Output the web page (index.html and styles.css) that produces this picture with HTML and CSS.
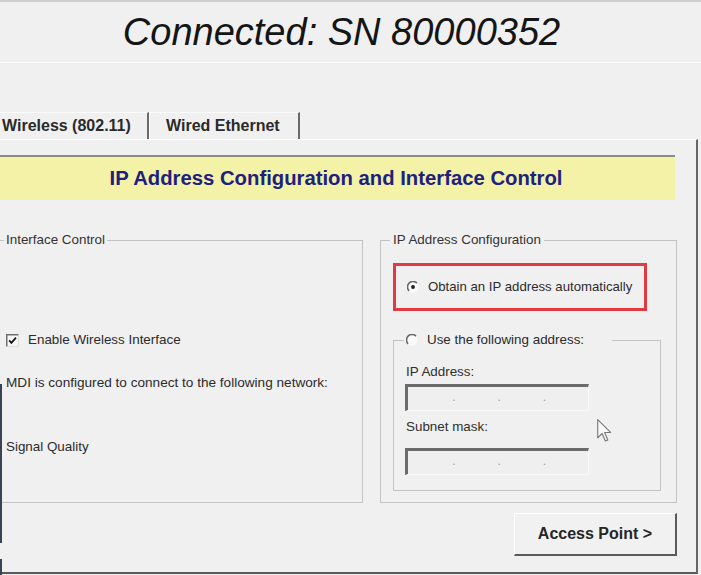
FILE: index.html
```html
<!DOCTYPE html>
<html lang="en">
<head>
<meta charset="utf-8">
<title>Connected: SN 80000352</title>
<link rel="stylesheet" href="styles.css">
</head>
<body>
<div class="topline"></div>
<header class="hdr">Connected: SN 80000352</header>
<nav class="tabs">
  <div class="tab tab-active">Wireless (802.11)</div>
  <div class="tab tab-second">Wired Ethernet</div>
</nav>
<main class="panel">
  <div class="banner">IP Address Configuration and Interface Control</div>
  <div class="groups">
    <fieldset class="grp grp-left">
      <legend class="lg">Interface Control</legend>
      <label class="check-row">
        <svg class="chk" width="13" height="13" viewBox="0 0 13 13">
          <rect x="0" y="0" width="13" height="13" fill="#f8f8f8"/>
          <path d="M0.75 12.6 V0.75 H12.6" stroke="#6e6e6e" stroke-width="1.5" fill="none"/>
          <path d="M1.5 12.4 H12.4 V1.5" stroke="#dcdcdc" stroke-width="1" fill="none"/>
          <path d="M3.2 6.4 L5.4 8.9 L10 3.6" stroke="#151515" stroke-width="1.8" fill="none"/>
        </svg>
        <span>Enable Wireless Interface</span>
      </label>
      <p class="txt mdi">MDI is configured to connect to the following network:</p>
      <p class="txt sig">Signal Quality</p>
    </fieldset>
    <fieldset class="grp grp-right">
      <legend class="lg lg-right">IP Address Configuration</legend>
      <div class="highlight">
        <svg class="radio" width="12" height="12" viewBox="0 0 12 12">
          <circle cx="6" cy="6" r="5.5" fill="#fafafa"/>
          <path d="M9.9 2.1 A5.5 5.5 0 0 0 2.1 9.9" stroke="#6a6a6a" stroke-width="1.6" fill="none"/>
          <circle cx="6" cy="6" r="1.9" fill="#1e1e1e"/>
        </svg>
        <span class="txt">Obtain an IP address automatically</span>
      </div>
      <fieldset class="grp grp-inner">
        <legend class="lg lg-radio">
          <svg class="radio" width="12" height="12" viewBox="0 0 12 12">
            <circle cx="6" cy="6" r="5.5" fill="#fafafa"/>
            <path d="M9.9 2.1 A5.5 5.5 0 0 0 2.1 9.9" stroke="#6a6a6a" stroke-width="1.6" fill="none"/>
          </svg><span class="txt">Use the following address:</span>
        </legend>
        <div class="field-label first">IP Address:</div>
        <div class="ipbox"><span class="seg"></span><span class="dot">.</span><span class="seg"></span><span class="dot">.</span><span class="seg"></span><span class="dot">.</span><span class="seg"></span></div>
        <div class="field-label second">Subnet mask:</div>
        <div class="ipbox ipbox-2"><span class="seg"></span><span class="dot">.</span><span class="seg"></span><span class="dot">.</span><span class="seg"></span><span class="dot">.</span><span class="seg"></span></div>
      </fieldset>
    </fieldset>
  </div>
  <div class="actions">
    <button class="btn" type="button">Access Point &gt;</button>
  </div>
  <svg class="cursor" width="15" height="23" viewBox="0 0 13 20">
    <path d="M0.6 0.6 L0.6 16.4 L4.4 12.6 L7.3 19.2 L9.4 18.2 L6.6 11.7 L11.8 11.7 Z" fill="#f8f8f8" stroke="#7a7a7a" stroke-width="1" stroke-linejoin="round"/>
  </svg>
</main>
</body>
</html>
```

FILE: styles.css
```css
html, body {
  margin: 0;
  padding: 0;
}
body {
  width: 701px;
  height: 575px;
  overflow: hidden;
  background: #f0f0f0;
  font-family: "Liberation Sans", Arial, sans-serif;
  color: #2b2b2b;
}
.topline {
  height: 2px;
  background: #cfcfcf;
}
.hdr {
  height: 60px;
  line-height: 60px;
  border-bottom: 1px solid #fbfbfb;
  text-align: center;
  font-size: 38px;
  font-style: italic;
  color: #151515;
  padding-right: 18px;
}
.tabs {
  display: flex;
  margin-top: 49px;
  height: 27px;
}
.tab {
  box-sizing: border-box;
  height: 27px;
  line-height: 26px;
  border-top: 1px solid #fcfcfc;
  border-right: 2px solid #6a6a6a;
  font-size: 16px;
  font-weight: bold;
  color: #2a2a2a;
  white-space: nowrap;
}
.tab-active {
  width: 149px;
  padding-left: 2px;
}
.tab-second {
  width: 151px;
  padding-left: 16px;
  border-left: 1px solid #ffffff;
}
.panel {
  position: relative;
  box-sizing: border-box;
  width: 698px;
  border-top: 1px solid #ffffff;
  border-right: 2px solid #666666;
  border-bottom: 2px solid #5a5a5a;
  padding-bottom: 16px;
}
.panel::before {
  content: "";
  position: absolute;
  left: 0;
  top: 244px;
  width: 2px;
  height: 191px;
  background: linear-gradient(to bottom, #3b4352 0 159px, transparent 159px 175px, #3b4352 175px);
}
.banner {
  box-sizing: border-box;
  width: 675px;
  height: 45px;
  margin-top: 15px;
  border-top: 2px solid #8c8c84;
  background: #f4f2a6;
  line-height: 43px;
  text-align: center;
  font-size: 20.3px;
  font-weight: bold;
  color: #20207e;
  padding-right: 3px;
}
.groups {
  display: flex;
  margin-top: 32px;
}
.grp {
  box-sizing: border-box;
  margin: 0;
  padding: 0;
  min-width: 0;
  border: 1px solid #c3c3c3;
}
.lg {
  font-size: 13.4px;
  line-height: 16px;
  padding: 0 2px;
  color: #333333;
}
.grp-left {
  width: 363px;
  height: 271px;
  border-left: none;
  padding-left: 4px;
}
.grp-right {
  width: 297px;
  height: 271px;
  margin-left: 17px;
  padding-left: 12px;
}
.lg-right {
  margin-left: -3px;
  padding: 0 3px;
}
.txt {
  font-size: 13.4px;
  line-height: 16px;
  color: #2b2b2b;
}
p.txt {
  margin: 0;
  margin-left: 2px;
}
.check-row {
  display: flex;
  align-items: center;
  gap: 9px;
  height: 16px;
  margin-top: 84px;
  margin-left: 2px;
  font-size: 13.4px;
  line-height: 16px;
}
.chk {
  display: block;
  flex: none;
}
.mdi {
  margin-top: 27px !important;
  font-size: 13.6px;
}
.sig {
  margin-top: 48px !important;
}
.highlight {
  box-sizing: border-box;
  display: flex;
  align-items: center;
  gap: 9px;
  width: 254px;
  height: 48px;
  margin-top: 15px;
  padding-left: 11px;
  border: 3px solid #e23b3f;
}
.highlight .txt {
  font-size: 13.2px;
}
.radio {
  display: block;
  flex: none;
}
.grp-inner {
  width: 268px;
  height: 159px;
  margin-top: 21px;
  padding-left: 11px;
}
.lg-radio {
  display: flex;
  align-items: center;
  gap: 9px;
  margin-left: -1px;
  padding: 0 28px 0 2px;
  height: 16px;
}
.field-label {
  font-size: 13.4px;
  line-height: 16px;
  padding-left: 1px;
  color: #2e2e2e;
}
.field-label.first {
  margin-top: 16px;
}
.field-label.second {
  margin-top: 8px;
}
.ipbox {
  box-sizing: border-box;
  display: flex;
  align-items: center;
  width: 184px;
  height: 27px;
  margin-top: 4px;
  border-top: 3px solid #6b6b6b;
  border-left: 3px solid #6b6b6b;
  border-right: 1px solid #f9f9f9;
  border-bottom: 1px solid #f9f9f9;
  background: #efefef;
}
.ipbox-2 {
  margin-top: 13px;
}
.seg {
  flex: 1;
}
.dot {
  width: 1px;
  font-size: 12px;
  line-height: 12px;
  margin-top: -4px;
  color: #a0a0a0;
}
.actions {
  display: flex;
  justify-content: flex-end;
  width: 677px;
  margin-top: 10px;
}
.btn {
  box-sizing: border-box;
  width: 163px;
  height: 43px;
  margin: 0;
  padding: 0;
  background: #f1f1f1;
  border-top: 1px solid #ffffff;
  border-left: 1px solid #ffffff;
  border-right: 2px solid #5a5a5a;
  border-bottom: 2px solid #5a5a5a;
  font-family: "Liberation Sans", Arial, sans-serif;
  font-size: 16px;
  font-weight: bold;
  color: #262626;
}
.cursor {
  position: absolute;
  left: 597px;
  top: 279px;
}
```
